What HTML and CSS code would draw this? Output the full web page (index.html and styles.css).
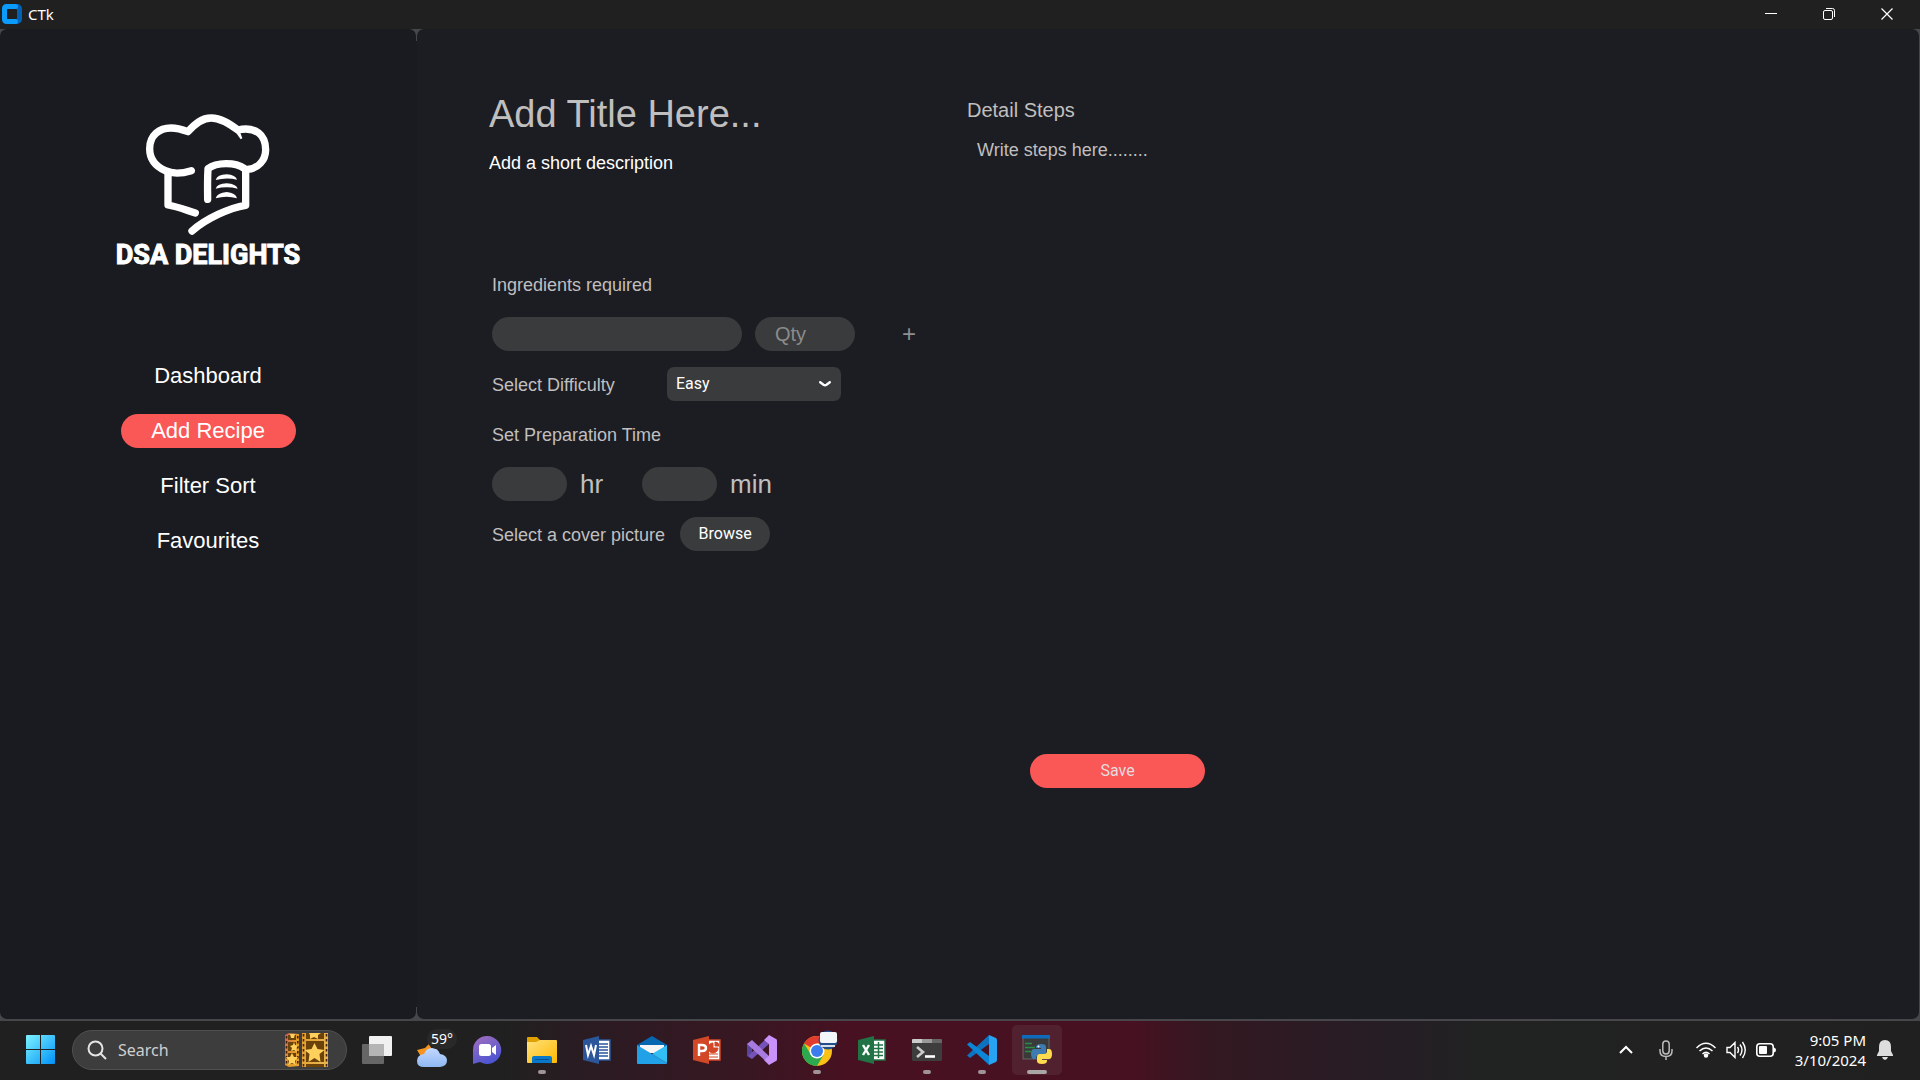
FILE: index.html
```html
<!DOCTYPE html>
<html lang="en">
<head>
<meta charset="utf-8">
<title>CTk</title>
<link rel="stylesheet" href="styles.css">
</head>
<body>
<header class="titlebar">
  <svg class="app-icon" viewBox="0 0 20 20" width="20" height="20" aria-hidden="true"><rect width="20" height="20" rx="5" fill="#0061b5"/><path d="M5 0h9q2 0 2 2.500t-2 2.500H5v10h9q2 0 2 2.500t-2 2.500H5q-5 0-5-5V5q0-5 5-5z" fill="#0a9bfb"/><rect x="5" y="5" width="10" height="10" rx="1" fill="#202020"/></svg>
  <span class="window-title">CTk</span>
  <div class="window-controls">
    <button class="window-button" aria-label="Minimize"><svg viewBox="0 0 12 12" width="12" height="12"><path d="M0 5.500h12" stroke="#fff"/></svg></button>
    <button class="window-button" aria-label="Restore"><svg viewBox="0 0 12 12" width="12" height="12" fill="none" stroke="#fff"><rect x=".5" y="2.500" width="9" height="9" rx="1.500"/><path d="M3 .5h6.500q2 0 2 2V9"/></svg></button>
    <button class="window-button" aria-label="Close"><svg viewBox="0 0 12 12" width="12" height="12"><path d="M.5.5l11 11M11.500.5l-11 11" stroke="#fff" stroke-width="1.200"/></svg></button>
  </div>
</header>

<div class="app">
  <aside class="sidebar">
    <div class="logo">
      <svg viewBox="435 338 378 372" width="126" height="124" aria-hidden="true">
        <g fill="none" stroke="#fff" stroke-width="22" stroke-linecap="round" stroke-linejoin="round">
          <path d="M574 511C545 520 515 520 496 511C463 496 449 471 449 445C449 405 478 383 513 383C533 383 548 388 564 394C585 370 605 353 634 353C662 353 688 370 714 389C738 383 759 386 775 397C791 409 797 428 797 448C797 480 773 506 742 507"/>
          <path d="M504 516V614C530 618 560 630 586 638"/>
          <path d="M737 510V615C690 622 617 655 576 692"/>
          <path d="M623 597Q622 540 624 505C650 485 706 485 732 504"/>
        </g>
        <g fill="#fff"><path d="M700 386L722 417L727 414L720 395z"/><path d="M647 539Q652 523 680 522Q707 524 711 538Q680 530 647 539z"/><path d="M647 565Q652 550 680 549Q709 551 713 565Q680 557 647 565z"/><path d="M647 594Q652 577 680 575Q707 577 711 594Q680 584 647 594z"/></g>
      </svg>
      <span class="logo-text">DSA DELIGHTS</span>
    </div>
    <nav class="nav" aria-label="Main">
      <button class="nav-button">Dashboard</button>
      <button class="nav-button nav-active">Add Recipe</button>
      <button class="nav-button">Filter Sort</button>
      <button class="nav-button">Favourites</button>
    </nav>
  </aside>
  <div class="divider"></div>
  <main class="recipe">
    <form class="details">
      <input class="title-input" aria-label="Title" placeholder="Add Title Here...">
      <textarea class="description" aria-label="Description" placeholder="Add a short description"></textarea>
      <div class="fields">
        <div class="row"><label for="ingredient">Ingredients required</label></div>
        <div class="row ingredient-row">
          <input class="pill" id="ingredient">
          <input class="pill qty" aria-label="Quantity" placeholder="Qty">
          <button class="add-button" type="button" aria-label="Add ingredient">+</button>
        </div>
        <div class="row">
          <label class="difficulty-label" for="difficulty">Select Difficulty</label>
          <div class="select-box">
            <select id="difficulty"><option>Easy</option><option>Medium</option><option>Hard</option></select>
            <svg viewBox="0 0 12 6" width="12" height="6" aria-hidden="true"><path d="M1.200 1.200L4.500 3.800q1.500 1 3 0l3.300-2.600" fill="none" stroke="#fff" stroke-width="2.400" stroke-linecap="round"/></svg>
          </div>
        </div>
        <div class="row"><span class="row-text">Set Preparation Time</span></div>
        <div class="row">
          <div class="time"><input class="pill" id="hours"><label for="hours">hr</label></div>
          <div class="time"><input class="pill" id="minutes"><label for="minutes">min</label></div>
        </div>
        <div class="row cover-row">
          <label for="browse">Select a cover picture</label>
          <button class="browse" id="browse" type="button">Browse</button>
        </div>
      </div>
    </form>
    <section class="steps">
      <label class="steps-label" for="steps">Detail Steps</label>
      <textarea class="steps-text" id="steps" placeholder="Write steps here........"></textarea>
      <button class="save" type="button">Save</button>
    </section>
  </main>
</div>

<footer class="taskbar">
  <button class="task" aria-label="Start"><svg viewBox="0 0 29 29" width="29" height="29"><defs><linearGradient id="win" x2="1" y2="1"><stop stop-color="#7df3ff"/><stop offset="1" stop-color="#0091f8"/></linearGradient></defs><path d="M1 0h13v14H0V1q0-1 1-1zM15 0h13q1 0 1 1v13H15zM0 15h14v14H1q-1 0-1-1zM15 15h14v13q0 1-1 1H15z" fill="url(#win)"/></svg></button>
  <div class="search">
    <svg viewBox="0 0 20 20" width="20" height="20" fill="none" stroke="#e4e4e4" stroke-width="2" aria-hidden="true"><circle cx="8.500" cy="8.500" r="7"/><path d="M13.500 13.500l5.500 5.500"/></svg>
    <input class="search-input" aria-label="Search" placeholder="Search">
    <svg viewBox="0 0 43 34" width="43" height="34" aria-hidden="true"><defs><linearGradient id="film" x1="0" x2="1" y2=".3"><stop stop-color="#c45c63"/><stop offset=".3" stop-color="#e39a25"/><stop offset="1" stop-color="#e8b34d"/></linearGradient></defs>
      <path d="M0 2L4 0 14 1V33L4 34 0 32zM17 0H43V34H17z" fill="url(#film)"/>
      <path d="M3 2h8v5H3zM3 9h8v9H3zM3 20h8v11H3zM21 0h18v6H21zM21 8h18v21H21zM21 31h18v3H21z" fill="#6b4209"/>
      <path d="M18.500 1v33M41.500 1v33M1.500 3v30M12.800 3v30" stroke="#44240e" stroke-width="1.600" stroke-dasharray="2.500 2.500"/>
      <path d="M29.500 10l3 6 7 1-5 4 1 8-6-4-6 4 1-8-5-4 7-1zM7 20l2 4 4 0-3 4 1 4-4-2-4 2 1-4-3-4 4 0zM9 9l1 3 3 1-2 2 1 4-3-2-3 1 1-3-2-2 3-1zM24 0h12l-3 2 0 4-4-2-4 2 0-4zM5 1h5l-1 4-3 0z" fill="#ffd05c"/></svg>
  </div>
  <button class="task" aria-label="Task view"><svg viewBox="0 0 30 28" width="30" height="28"><rect y="8" width="22" height="20" rx="1" fill="#666"/><rect x="7" width="23" height="20" rx="1" fill="#f1f1f1"/><path d="M7 8h15v12H7z" fill="#b5b5b5"/></svg></button>
  <button class="task weather" aria-label="Weather"><svg viewBox="0 0 30 24" width="30" height="24"><defs><linearGradient id="cloud" x2="0" y2="1"><stop stop-color="#c2d8ff"/><stop offset="1" stop-color="#8fb8f1"/></linearGradient></defs><path d="M0 7l8-2 4-4 5 9-11 7z" fill="#f7941e"/><path d="M7 24q-7 0-7-6t7-7q2-6 8-6t8 6q7 1 7 6.500T23 24z" fill="url(#cloud)"/></svg><span class="temperature">59°</span></button>
  <button class="task" aria-label="Chat"><svg viewBox="0 0 30 30" width="30" height="30"><defs><linearGradient id="chat" x2=".5" y2="1"><stop stop-color="#a56fbd"/><stop offset="1" stop-color="#4d55d1"/></linearGradient></defs><path d="M15 1a14 14 0 1 1-7 26L1 29V15A14 14 0 0 1 15 1z" fill="url(#chat)"/><rect x="7" y="9" width="12" height="12" rx="2.500" fill="#fff"/><path d="M20 13l4-3v10l-4-3z" fill="#fff"/></svg></button>
  <button class="task running" aria-label="File Explorer"><svg viewBox="0 0 30 28" width="30" height="28"><defs><linearGradient id="folder" x2="1" y2="1"><stop stop-color="#ffe17c"/><stop offset="1" stop-color="#ffb900"/></linearGradient></defs><path d="M0 8V2q0-1 1-1h9l3 3h16v5z" fill="#dfa000"/><path d="M0 6h9l4-2h16q1 0 1 1v21q0 1-1 1H1q-1 0-1-1z" fill="url(#folder)"/><path d="M5 27v-5q0-2 2-2h16q2 0 2 2v5z" fill="#0878c9"/><path d="M8 23.500h14" stroke="#03509a"/></svg></button>
  <button class="task" aria-label="Word"><svg viewBox="0 0 28 28" width="28" height="28"><rect x="13" y="4" width="14" height="20" fill="#fff" stroke="#2b579a" stroke-width="1.500"/><path d="M16 8h9M16 11h9M16 14h9M16 17h9M16 20h9" stroke="#2b579a" stroke-width="1.500"/><path d="M0 4L16 0v28L0 24z" fill="#2b579a"/><path d="M3 9l2 10 3-9 3 9 2-10" fill="none" stroke="#fff" stroke-width="2"/></svg></button>
  <button class="task" aria-label="Mail"><svg viewBox="0 0 30 28" width="30" height="28"><path d="M0 9L15 0l15 9v8H0z" fill="#0467b0"/><path d="M3 9h24v8H3z" fill="#f5f5f5"/><path d="M0 9l30 18q0 1-1 1H1q-1 0-1-1z" fill="#20a1e8"/><path d="M30 9v18L15 18z" fill="#32bdf4"/></svg></button>
  <button class="task" aria-label="PowerPoint"><svg viewBox="0 0 28 28" width="28" height="28"><rect x="13" y="4" width="14" height="20" fill="#fff" stroke="#d24726" stroke-width="1.500"/><path d="M20 7v5h5a5 5 0 1 1-5-5M22 6q4 0 4 4h-4zM16 18h9M16 21h9" fill="#d24726" stroke="#d24726"/><path d="M0 4L16 0v28L0 24z" fill="#d24726"/><path d="M6 20V9h3q4 0 4 3t-4 3H6" fill="none" stroke="#fff" stroke-width="2.400"/></svg></button>
  <button class="task" aria-label="Visual Studio"><svg viewBox="0 0 30 30" width="30" height="30"><path d="M0 9l5-3v18l-5-3z" fill="#59449c"/><path d="M22 1v8L5 24l-4-3z" fill="#7552b8"/><path d="M5 5L22 21v8L0 9z" fill="#a87be0"/><path d="M22 0l7 4q1 0 1 2v18q0 2-1 2l-7 4-5-5 5-4V9l-5-4z" fill="#c892fa"/></svg></button>
  <button class="task running" aria-label="Chrome"><svg class="badged" viewBox="0 0 36 36" width="36" height="36"><circle cx="15" cy="21" r="15" fill="#fbc116"/><path d="M15 21L2 13.500A15 15 0 0 1 28 13.500H15z" fill="#e33b2e"/><path d="M15 21l6.500 4L15 36A15 15 0 0 1 2 13.500l7 11z" fill="#2da94f"/><circle cx="15" cy="21" r="7.500" fill="#fff"/><circle cx="15" cy="21" r="6" fill="#3b7ded"/><circle cx="26" cy="10" r="9.500" fill="#244d8c"/><rect x="18" y="2" width="17" height="11" rx="2" fill="#f3f7fa"/><path d="M19 16h14" stroke="#d5dde5" stroke-width="2"/></svg></button>
  <button class="task" aria-label="Excel"><svg viewBox="0 0 28 28" width="28" height="28"><rect x="13" y="4" width="14" height="20" fill="#fff" stroke="#217346" stroke-width="1.500"/><path d="M20.500 6v16M15 9h10M15 12.500h10M15 16h10M15 19.500h10" stroke="#217346" stroke-width="1.500"/><path d="M0 4L16 0v28L0 24z" fill="#217346"/><path d="M5 9l6 10M11 9L5 19" stroke="#fff" stroke-width="2.400"/></svg></button>
  <button class="task running" aria-label="Terminal"><svg viewBox="0 0 30 22" width="30" height="22"><rect width="30" height="22" rx="1.500" fill="#3d3d3d"/><path d="M0 4V1q0-1 1-1h9v4z" fill="#ccc"/><path d="M10 0h10v4H10z" fill="#999"/><path d="M20 0h9q1 0 1 1v3H20z" fill="#666"/><path d="M5 8l6 5-6 5" fill="none" stroke="#ccc" stroke-width="2.600"/><path d="M13 17.500h10" stroke="#fff" stroke-width="2.600"/></svg></button>
  <button class="task running" aria-label="Visual Studio Code"><svg viewBox="0 0 30 30" width="30" height="30"><path d="M0 20.500L22 0v9L3 23z" fill="#0d73c0"/><path d="M0 9.500l3-2.500 19 14v9z" fill="#0b86d6"/><path d="M22 0l7 3q1 1 1 2v20q0 1-1 2l-7 3z" fill="#27a3f2"/></svg></button>
  <button class="task running active" aria-label="Python"><svg viewBox="0 0 30 30" width="30" height="30"><rect x="1" y="1" width="26" height="23" fill="#3a3a3a" stroke="#666"/><path d="M0 0h28v3.500H0z" fill="#0f6cbd"/><path d="M3 8.500h7M3 12.500h10M3 16.500h6" stroke="#2e8b43" stroke-width="1.400"/><path d="M14 18v-6q0-3 5-3t5 3v5q0 3-3 3h-4q-3 0-3 4h-2q-3 0-3-5t3-5h7v-1h-5" fill="#3d7bb0"/><path d="M25 14h2q3 0 3 5t-3 5h-7v1h5v1q0 3-5 3t-5-3v-4q0-3 3-3h4q3 0 3-3z" fill="#ffdc4e"/><circle cx="16.500" cy="11.500" r="1" fill="#fff"/></svg></button>
  <div class="tray">
    <button class="tray-button tray-wide" aria-label="Hidden icons"><svg viewBox="0 0 14 9" width="14" height="9"><path d="M1 8l6-6 6 6" fill="none" stroke="#fff" stroke-width="2"/></svg></button>
    <button class="tray-button tray-wide" aria-label="Microphone"><svg viewBox="0 0 14 20" width="14" height="20" fill="none" stroke="#bbb" stroke-width="1.500"><rect x="3.800" y="1" width="6.400" height="13" rx="3.200"/><path d="M1 9v2q0 5.500 6 5.500t6-5.500V9M7 16.500V20"/></svg></button>
    <div class="tray-group">
      <button class="tray-button" aria-label="Wi-Fi"><svg viewBox="0 0 20 16" width="20" height="16" fill="none" stroke="#fff" stroke-width="1.500"><path d="M.5 6q9.500-9.500 19 0M3.500 9q6.500-6 13 0M6.500 12q3.500-3.500 7 0"/><circle cx="10" cy="13.500" r="1.500" fill="#fff"/></svg></button>
      <button class="tray-button" aria-label="Volume"><svg viewBox="0 0 20 18" width="20" height="18" fill="none" stroke="#fff" stroke-width="1.400"><path d="M1 6.500h3l5-5v15l-5-5H1zM11.500 6q2 3 0 6M14 3.500q4 5.500 0 11M16.500 1q5.500 8 0 16"/></svg></button>
      <button class="tray-button" aria-label="Battery"><svg viewBox="0 0 20 14" width="20" height="14"><rect x=".8" y=".8" width="16.400" height="12.400" rx="3" fill="none" stroke="#fff" stroke-width="1.600"/><rect x="3" y="3" width="8" height="8" rx="1" fill="#fff"/><path d="M18 4.500q2 .5 2 2.500t-2 2.500z" fill="#fff"/></svg></button>
    </div>
    <div class="clock"><span>9:05 PM</span><span>3/10/2024</span></div>
    <button class="tray-button" aria-label="Notifications"><svg viewBox="0 0 16 20" width="16" height="20" fill="#ddd"><path d="M8 0q6 0 6 7v4l2 4v1H0v-1l2-4V7q0-7 6-7zM5 17h6q-1 3-3 3t-3-3z"/></svg></button>
  </div>
</footer>
</body>
</html>
```
FILE: styles.css
```css
* { box-sizing: border-box; }

body {
  margin: 0;
  min-height: 100vh;
  display: flex;
  flex-direction: column;
  background: #1c1d22;
  color: #c0bfbf;
  font: 18px/22px "Liberation Sans", Arial, sans-serif;
}

button, input, textarea, select {
  margin: 0;
  padding: 0;
  border: 0;
  outline: 0;
  background: none;
  color: inherit;
  font: inherit;
}
input { min-width: 0; }
textarea { display: block; resize: none; }
svg { display: block; flex: none; }

/* Title bar */
.titlebar {
  display: flex;
  align-items: center;
  height: 29px;
  padding: 0 4px 2px 2px;
  gap: 6px;
  background: #202020;
  color: #fff;
  font: 15px/20px "Noto Sans", sans-serif;
}
.window-controls { display: flex; margin-left: auto; }
.window-button { display: grid; place-items: center; width: 58px; height: 27px; }

/* Application body */
.app {
  flex: 1;
  display: flex;
  padding: 0 1px 2px 0;
  background: #47474b;
}
.sidebar {
  width: 416px;
  padding-top: 84px;
  border-radius: 7px;
  background: #1a1b20;
}
.divider {
  width: 1px;
  background: linear-gradient(#47474b 12px, #1a1b20 12px, #1a1b20 calc(100% - 12px), #47474b calc(100% - 12px));
}
.logo { display: flex; flex-direction: column; align-items: center; color: #fff; }
.logo-text {
  margin-top: 3px;
  font: bold 27px/30px Roboto, "Open Sans", sans-serif;
  -webkit-text-stroke: 1px #fff;
}
.nav {
  display: flex;
  flex-direction: column;
  align-items: center;
  gap: 21px;
  margin-top: 89px;
}
.nav-button {
  width: 175px;
  height: 34px;
  border-radius: 17px;
  color: #fff;
  font-size: 22px;
}
.nav-active { background: #fa5757; }

/* Recipe form */
.recipe {
  flex: 1;
  display: grid;
  grid-template-columns: 478px 1fr;
  align-items: start;
  padding: 62px 72px;
  border-radius: 7px;
  background: #1c1d22;
}
::placeholder { color: #c0bfbf; opacity: 1; }
.details { display: flex; flex-direction: column; }
.title-input { width: 400px; height: 46px; font-size: 38px; }
.description { width: 400px; height: 100px; margin-top: 15px; overflow: hidden; }
.description::placeholder { color: #fff; }
.fields {
  display: flex;
  flex-direction: column;
  gap: 16px;
  margin: 15px 0 0 3px;
}
.row { display: flex; align-items: center; height: 34px; }
.row > label, .row-text { padding-top: 2px; }
.pill {
  height: 34px;
  padding: 0 20px;
  border-radius: 17px;
  background: #3a3b3c;
  font-size: 20px;
}
.ingredient-row { gap: 13px; }
.ingredient-row .pill { width: 250px; }
.ingredient-row .qty { width: 100px; }
.qty::placeholder { color: #8b8b8b; }
.add-button { width: 34px; height: 34px; margin-left: 24px; color: #8f8f8f; font-size: 24px; }
.difficulty-label { width: 175px; }
.select-box { display: grid; align-items: center; width: 174px; }
.select-box > * { grid-area: 1 / 1; }
.select-box select {
  height: 34px;
  padding: 0 9px;
  border-radius: 7px;
  background: #3a3b3c;
  color: #fff;
  font: 16px/20px Roboto, sans-serif;
  appearance: none;
}
.select-box svg { justify-self: end; margin-right: 10px; pointer-events: none; }
.time { display: flex; align-items: center; gap: 13px; width: 150px; font-size: 26px; }
.time .pill { width: 75px; }
.cover-row { gap: 15px; }
.browse {
  width: 90px;
  height: 34px;
  border-radius: 17px;
  background: #3a3b3c;
  color: #fff;
  font: 16px/20px Roboto, sans-serif;
}

.steps { display: flex; flex-direction: column; align-items: flex-start; padding-top: 7px; }
.steps-label { font-size: 20px; line-height: 24px; }
.steps-text { width: 100%; height: 610px; margin-top: 9px; padding: 8px 10px; }
.save {
  width: 175px;
  height: 34px;
  margin: 13px 0 0 63px;
  border-radius: 17px;
  background: #fa5757;
  color: #e6dcdf;
  font: 16px/20px Roboto, sans-serif;
}

/* Taskbar */
.taskbar {
  display: flex;
  align-items: center;
  gap: 5px;
  height: 59px;
  padding: 0 20px 2px 15px;
  background: linear-gradient(90deg, #202020 26%, #2b1b22 31%, #381722 39%, #471121 44%, #471121 59%, #331821 63%, #261d25 72%, #212222 77%, #202020);
  color: #fff;
  font: 15px/20px "Noto Sans", sans-serif;
}
.task {
  position: relative;
  display: grid;
  place-items: center;
  width: 50px;
  height: 50px;
  border-radius: 5px;
}
.running::after {
  content: "";
  position: absolute;
  left: 21px;
  bottom: 1px;
  width: 8px;
  height: 4px;
  border-radius: 2px;
  background: #a09398;
}
.active { background: #52212f; }
.active::after { left: 15px; width: 20px; background: #aaa5a6; }
.temperature {
  position: absolute;
  top: 4px;
  right: 0;
  padding: 0 4px;
  border-radius: 10px;
  background: #292929;
  font-size: 14px;
}
.weather svg { margin-top: 10px; }
.badged { margin: 0 0 4px 6px; }
.search {
  display: flex;
  align-items: center;
  width: 275px;
  height: 40px;
  margin-left: 2px;
  padding: 0 18px 0 14px;
  gap: 11px;
  border: 1px solid #505050;
  border-radius: 20px;
  background: #3d3d3e;
}
.search-input { flex: 1; font-size: 16px; }
.search-input::placeholder { color: #cfcfcf; }
.tray { display: flex; align-items: center; margin-left: auto; }
.tray-group { display: flex; margin-left: 5px; }
.tray-button { display: grid; place-items: center; width: 30px; height: 40px; }
.tray-wide { width: 40px; }
.clock { display: flex; flex-direction: column; width: 85px; margin-right: 4px; text-align: right; }
```
